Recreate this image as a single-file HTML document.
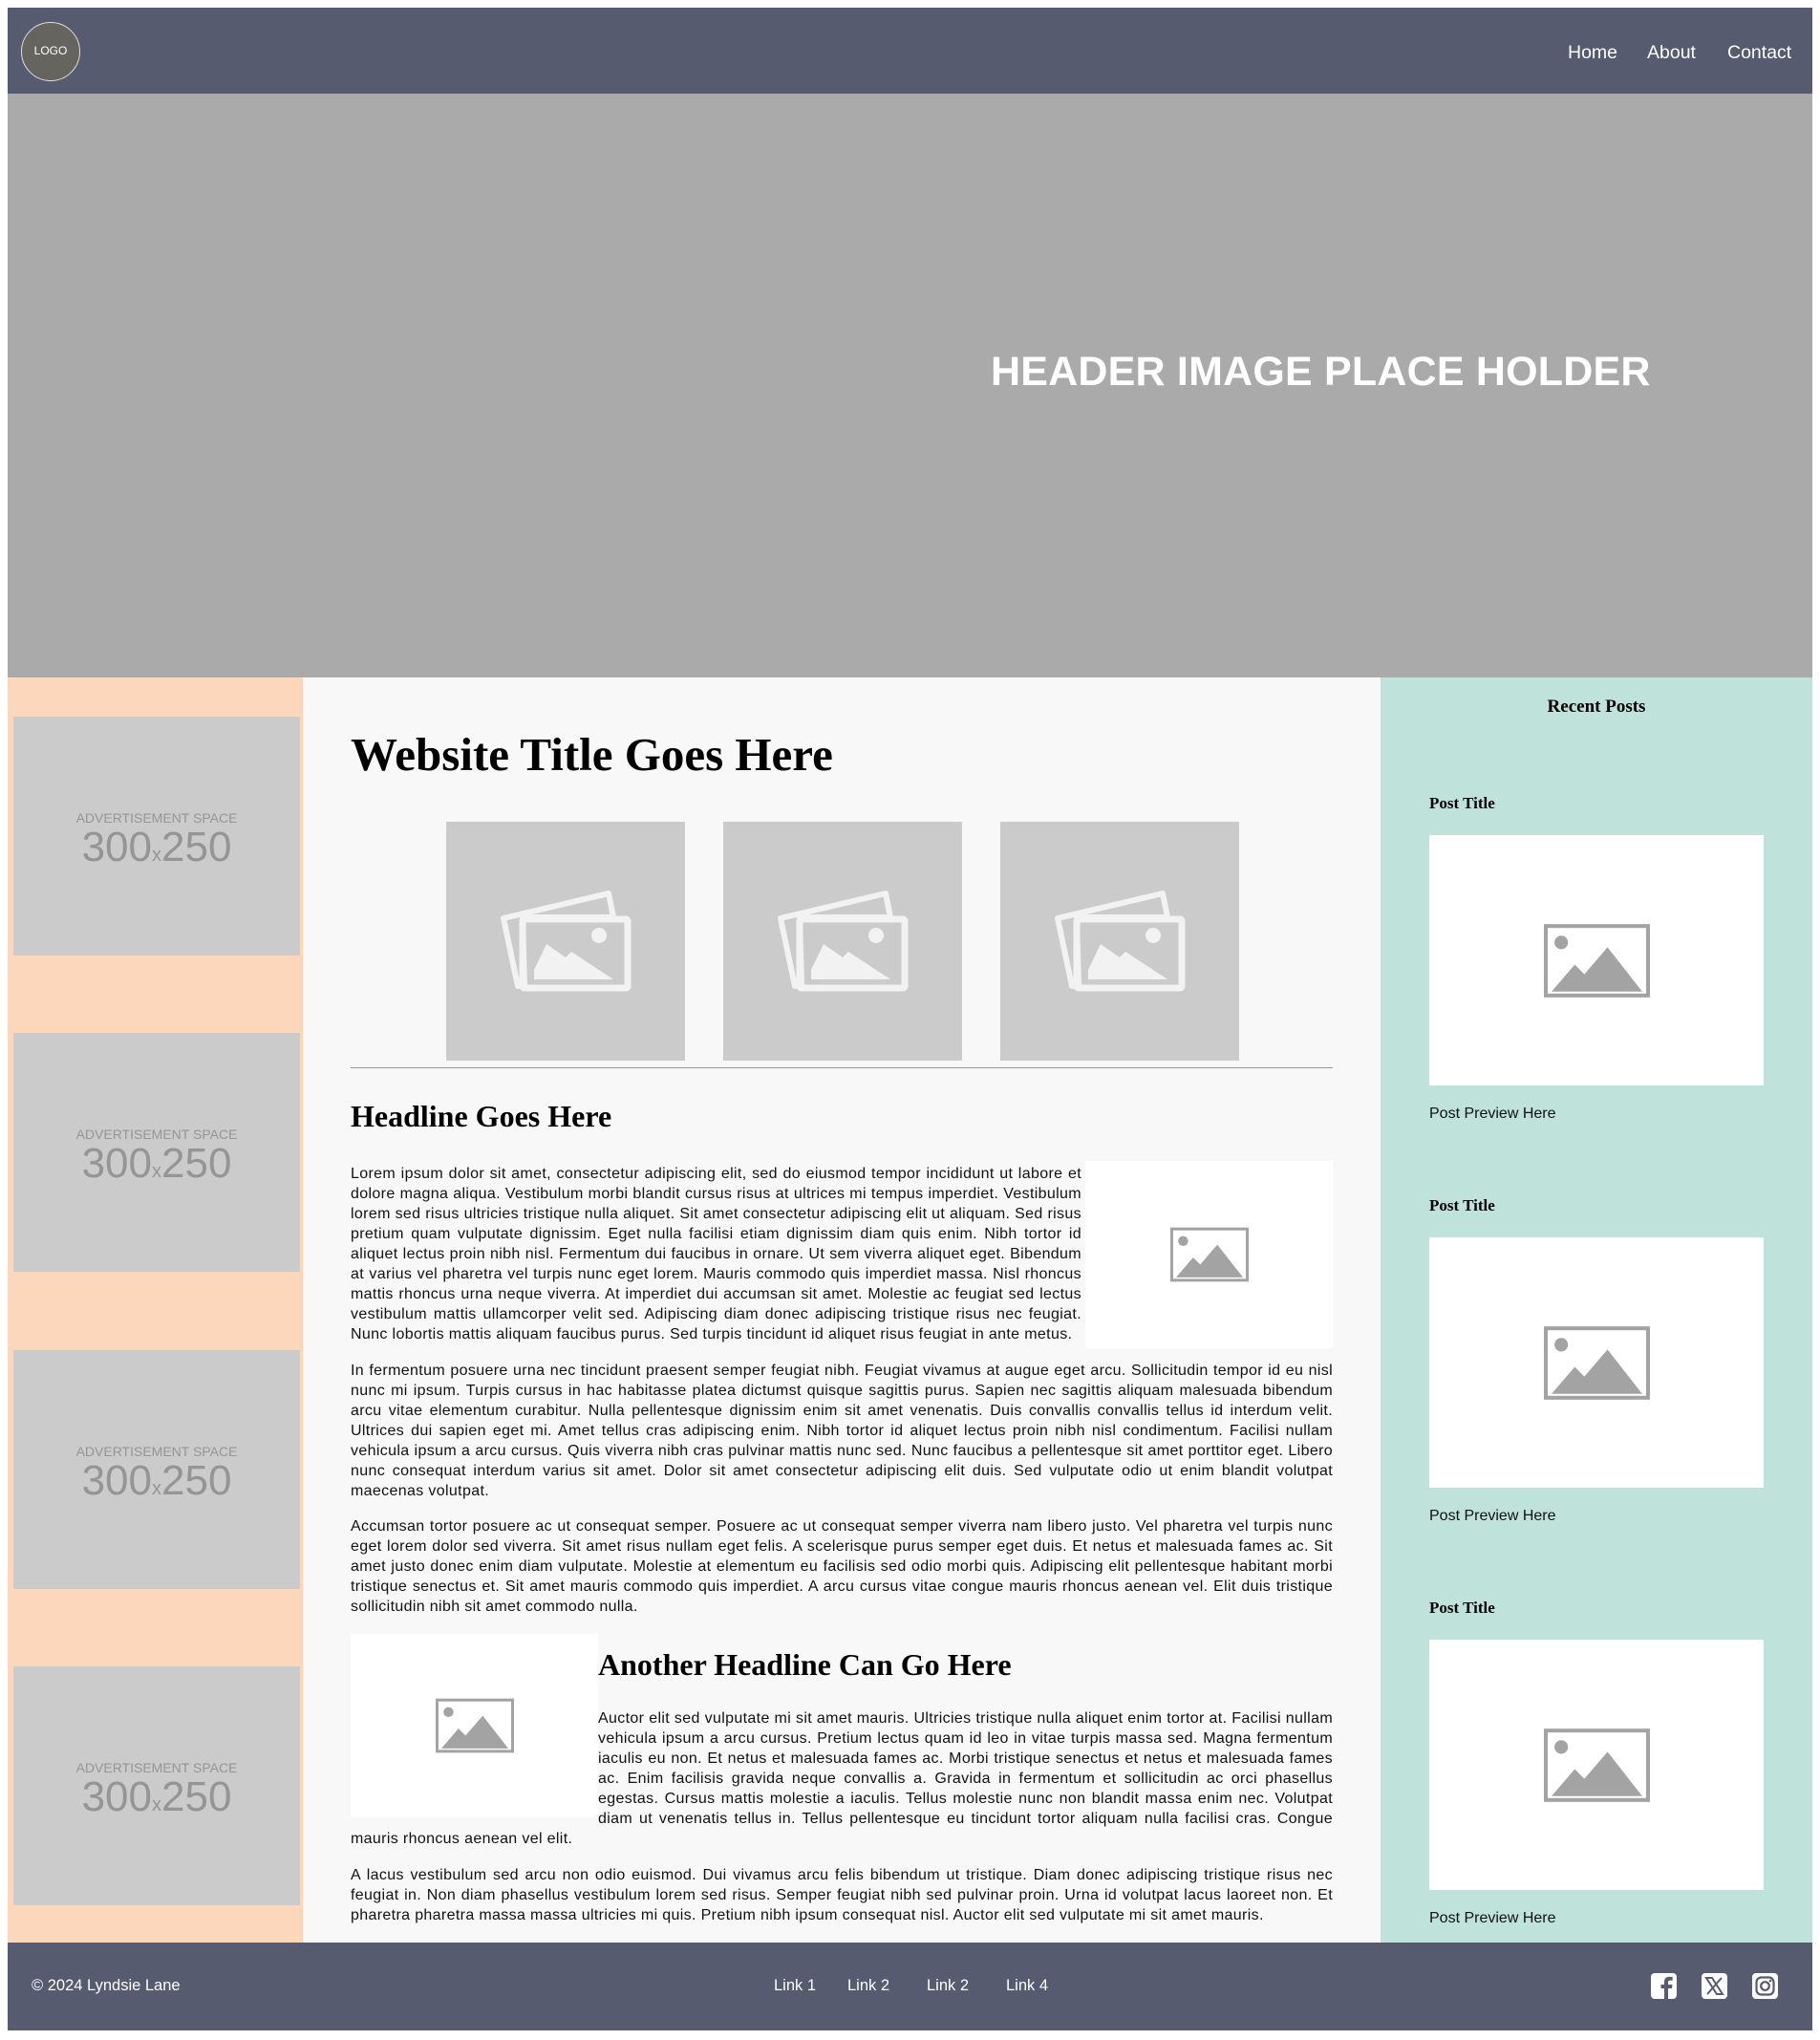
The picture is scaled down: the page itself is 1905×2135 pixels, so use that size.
<!DOCTYPE html>
<html><head><meta charset="utf-8">
<style>
*{box-sizing:border-box;margin:0;padding:0}
body{width:1905px;height:2135px;background:#fff;position:relative;font-family:"Liberation Sans",sans-serif;overflow:hidden}
.abs{position:absolute}
nav{position:absolute;left:8px;top:8px;width:1889px;height:90px;background:#565b70}
.logo{position:absolute;left:14px;top:15px;width:62px;height:62px;border-radius:50%;background:#66645f;border:1.5px solid #ddd;color:#fff;font-size:12px;text-align:center;line-height:59px}
nav a{position:absolute;top:36px;color:#fff;font-size:19.5px;text-decoration:none}
.hero{left:8px;top:98px;width:1889px;height:611px;background:#aaa}
.hero span{position:absolute;left:1029px;top:267px;color:#fff;font-weight:bold;font-size:43px;letter-spacing:0.2px;white-space:nowrap}
.left{left:8px;top:709px;width:309px;height:1324px;background:#fcd7bb}
.ad{position:absolute;left:6px;width:300px;height:250px;background:#cbcbcb;color:#959595;text-align:center}
.ad .a{position:absolute;top:98px;width:100%;font-size:14px}
.ad .b{position:absolute;top:112px;width:100%;font-size:44px}
.ad .b small{font-size:20px}
.center{left:317px;top:709px;width:1128px;height:1324px;background:#f8f8f8}
.right{left:1445px;top:709px;width:452px;height:1324px;background:#bfe3da}
h1,h2,h3,h4{font-family:"Liberation Serif",serif;font-weight:bold;color:#000}
.ph{position:absolute;width:250px;height:250px;background:#cbcbcb}
p{font-size:16px;letter-spacing:0.35px;line-height:21px;text-align:justify;color:#111}
.wimg{background:#fff;display:flex;align-items:center;justify-content:center}
.post .img{position:absolute;left:51px;width:350px;height:262px}
.post h4{position:absolute;left:51px;font-size:17px}
.post div.t{position:absolute;left:51px;font-size:16px;color:#111}
footer{position:absolute;left:8px;top:2033px;width:1889px;height:92px;background:#565b70;color:#fff;font-size:16.5px}
footer span{position:absolute;top:36px}
</style></head><body>
<nav><div class="logo">LOGO</div>
<a style="left:1633px">Home</a><a style="left:1716px">About</a><a style="left:1800px">Contact</a></nav>
<div class="abs hero"><span>HEADER IMAGE PLACE HOLDER</span></div>
<div class="abs left">
<div class="ad" style="top:41px"><div class="a">ADVERTISEMENT SPACE</div><div class="b">300<small>x</small>250</div></div>
<div class="ad" style="top:372px"><div class="a">ADVERTISEMENT SPACE</div><div class="b">300<small>x</small>250</div></div>
<div class="ad" style="top:704px"><div class="a">ADVERTISEMENT SPACE</div><div class="b">300<small>x</small>250</div></div>
<div class="ad" style="top:1035px"><div class="a">ADVERTISEMENT SPACE</div><div class="b">300<small>x</small>250</div></div>
</div>
<div class="abs center">
<h1 style="position:absolute;left:50px;top:52px;font-size:49px;letter-spacing:0">Website Title Goes Here</h1>
<svg width="0" height="0" style="position:absolute"><defs><g id="pics"><path d="M60 101 L170 75 L175 100 L80 100 L82 170 L75 172 Z" fill="none" stroke="#f2f2f2" stroke-width="6" stroke-linejoin="round"/><rect x="80" y="102" width="110" height="72" fill="none" stroke="#f2f2f2" stroke-width="7" rx="2"/><circle cx="160" cy="119" r="8" fill="#f2f2f2"/><path d="M92 165 L92 155 L105 128 L125 142 L131 136 L175 165 Z" fill="#f2f2f2"/></g>
<g id="mt"><rect x="2" y="2" width="106" height="72" fill="none" stroke="#a3a3a3" stroke-width="4"/><circle cx="18" cy="19" r="7" fill="#a3a3a3"/><path d="M8 70 L32 42 L42 52 L66 24 L102 70 Z" fill="#a3a3a3"/></g></defs></svg>
<div class="ph" style="left:150px;top:151px"><svg width="250" height="250"><use href="#pics"/></svg></div>
<div class="ph" style="left:440px;top:151px"><svg width="250" height="250"><use href="#pics"/></svg></div>
<div class="ph" style="left:730px;top:151px"><svg width="250" height="250"><use href="#pics"/></svg></div>
<div style="position:absolute;left:50px;top:408px;width:1028px;height:1px;background:#999"></div>
<h2 style="position:absolute;left:50px;top:441px;font-size:32px;letter-spacing:0">Headline Goes Here</h2>
<div style="position:absolute;left:50px;top:506px;width:1028px">
<div class="wimg" style="float:right;width:259px;height:196px;margin-left:4px"><svg width="82" height="58" viewBox="0 0 110 76"><use href="#mt"/></svg></div>
<p style="padding-top:3px">Lorem ipsum dolor sit amet, consectetur adipiscing elit, sed do eiusmod tempor incididunt ut labore et dolore magna aliqua. Vestibulum morbi blandit cursus risus at ultrices mi tempus imperdiet. Vestibulum lorem sed risus ultricies tristique nulla aliquet. Sit amet consectetur adipiscing elit ut aliquam. Sed risus pretium quam vulputate dignissim. Eget nulla facilisi etiam dignissim diam quis enim. Nibh tortor id aliquet lectus proin nibh nisl. Fermentum dui faucibus in ornare. Ut sem viverra aliquet eget. Bibendum at varius vel pharetra vel turpis nunc eget lorem. Mauris commodo quis imperdiet massa. Nisl rhoncus mattis rhoncus urna neque viverra. At imperdiet dui accumsan sit amet. Molestie ac feugiat sed lectus vestibulum mattis ullamcorper velit sed. Adipiscing diam donec adipiscing tristique risus nec feugiat. Nunc lobortis mattis aliquam faucibus purus. Sed turpis tincidunt id aliquet risus feugiat in ante metus.</p>
<p style="margin-top:17px">In fermentum posuere urna nec tincidunt praesent semper feugiat nibh. Feugiat vivamus at augue eget arcu. Sollicitudin tempor id eu nisl nunc mi ipsum. Turpis cursus in hac habitasse platea dictumst quisque sagittis purus. Sapien nec sagittis aliquam malesuada bibendum arcu vitae elementum curabitur. Nulla pellentesque dignissim enim sit amet venenatis. Duis convallis convallis tellus id interdum velit. Ultrices dui sapien eget mi. Amet tellus cras adipiscing enim. Nibh tortor id aliquet lectus proin nibh nisl condimentum. Facilisi nullam vehicula ipsum a arcu cursus. Quis viverra nibh cras pulvinar mattis nunc sed. Nunc faucibus a pellentesque sit amet porttitor eget. Libero nunc consequat interdum varius sit amet. Dolor sit amet consectetur adipiscing elit duis. Sed vulputate odio ut enim blandit volutpat maecenas volutpat.</p>
<p style="margin-top:16px">Accumsan tortor posuere ac ut consequat semper. Posuere ac ut consequat semper viverra nam libero justo. Vel pharetra vel turpis nunc eget lorem dolor sed viverra. Sit amet risus nullam eget felis. A scelerisque purus semper eget duis. Et netus et malesuada fames ac. Sit amet justo donec enim diam vulputate. Molestie at elementum eu facilisis sed odio morbi quis. Adipiscing elit pellentesque habitant morbi tristique senectus et. Sit amet mauris commodo quis imperdiet. A arcu cursus vitae congue mauris rhoncus aenean vel. Elit duis tristique sollicitudin nibh sit amet commodo nulla.</p>
<div class="wimg" style="float:left;width:259px;height:192px;margin-top:18px"><svg width="82" height="58" viewBox="0 0 110 76"><use href="#mt"/></svg></div>
<h2 style="font-size:32px;letter-spacing:0;padding-top:32px;height:96px">Another Headline Can Go Here</h2>
<p>Auctor elit sed vulputate mi sit amet mauris. Ultricies tristique nulla aliquet enim tortor at. Facilisi nullam vehicula ipsum a arcu cursus. Pretium lectus quam id leo in vitae turpis massa sed. Magna fermentum iaculis eu non. Et netus et malesuada fames ac. Morbi tristique senectus et netus et malesuada fames ac. Enim facilisis gravida neque convallis a. Gravida in fermentum et sollicitudin ac orci phasellus egestas. Cursus mattis molestie a iaculis. Tellus molestie nunc non blandit massa enim nec. Volutpat diam ut venenatis tellus in. Tellus pellentesque eu tincidunt tortor aliquam nulla facilisi cras. Congue mauris rhoncus aenean vel elit.</p>
<p style="margin-top:17px">A lacus vestibulum sed arcu non odio euismod. Dui vivamus arcu felis bibendum ut tristique. Diam donec adipiscing tristique risus nec feugiat in. Non diam phasellus vestibulum lorem sed risus. Semper feugiat nibh sed pulvinar proin. Urna id volutpat lacus laoreet non. Et pharetra pharetra massa massa ultricies mi quis. Pretium nibh ipsum consequat nisl. Auctor elit sed vulputate mi sit amet mauris.</p>
</div>
</div>
<div class="abs right">
<h3 style="position:absolute;top:20px;width:100%;text-align:center;font-size:19px">Recent Posts</h3>
<div class="post" style="position:absolute;left:0;top:0;width:452px">
<h4 style="top:122px">Post Title</h4><div class="img wimg" style="top:165px"><svg width="111" height="77" viewBox="0 0 110 76"><use href="#mt"/></svg></div><div class="t" style="top:448px">Post Preview Here</div>
<h4 style="top:543px">Post Title</h4><div class="img wimg" style="top:586px"><svg width="111" height="77" viewBox="0 0 110 76"><use href="#mt"/></svg></div><div class="t" style="top:869px">Post Preview Here</div>
<h4 style="top:964px">Post Title</h4><div class="img wimg" style="top:1007px"><svg width="111" height="77" viewBox="0 0 110 76"><use href="#mt"/></svg></div><div class="t" style="top:1290px">Post Preview Here</div>
</div>
</div>
<footer>
<span style="left:25px">© 2024 Lyndsie Lane</span>
<span style="left:802px">Link 1</span><span style="left:879px">Link 2</span><span style="left:962px">Link 2</span><span style="left:1045px">Link 4</span>
<svg style="position:absolute;left:1719px;top:31px" width="150" height="30">
<rect x="1" y="1" width="27" height="27" rx="4" fill="#fff"/><path d="M19 28 V17 H23 L23.5 13 H19 V10.5 C19 9.3 19.5 8.7 21 8.7 H23.6 V5 C22.5 4.9 21.5 4.8 20.3 4.8 C17 4.8 15 6.8 15 10.2 V13 H11.5 V17 H15 V28 Z" fill="#565b70"/>
<rect x="54" y="1" width="27" height="27" rx="4" fill="#fff"/><path d="M59 6 H65 L76 23 H70 Z" fill="none" stroke="#565b70" stroke-width="2"/><path d="M75 6 L60 23" stroke="#565b70" stroke-width="2"/>
<rect x="107" y="1" width="27" height="27" rx="4" fill="#fff"/><rect x="111.5" y="5.5" width="18" height="18" rx="5" fill="none" stroke="#565b70" stroke-width="2.2"/><circle cx="120.5" cy="14.5" r="4.3" fill="none" stroke="#565b70" stroke-width="2.2"/><circle cx="126" cy="9" r="1.3" fill="#565b70"/>
</svg>
</footer>
</body></html>
